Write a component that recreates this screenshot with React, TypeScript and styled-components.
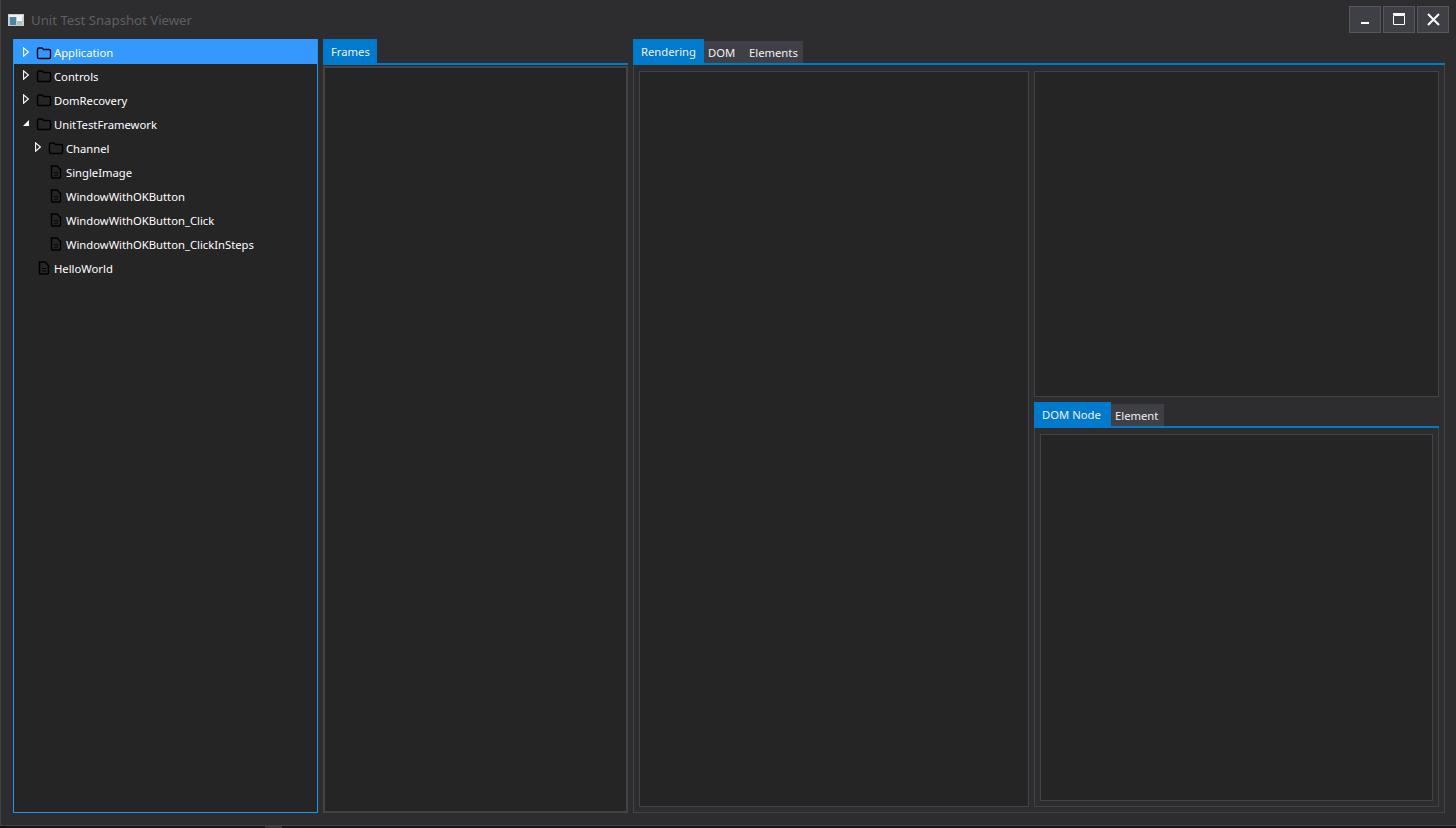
import React from 'react';
import styled, { createGlobalStyle } from 'styled-components';

const GlobalStyle = createGlobalStyle`
  html, body {
    margin: 0;
    height: 100%;
    background: #141414;
    overflow: hidden;
  }
  * {
    box-sizing: border-box;
  }
`;

const Window = styled.div`
  display: flex;
  flex-direction: column;
  width: 1456px;
  height: 826px;
  background-color: #2d2d30;
  border-left: 1px solid #434346;
  border-bottom: 1px solid #434346;
  font-family: 'Noto Sans', 'Open Sans', sans-serif;
  font-size: 11.25px;
  color: #f1f1f1;
`;

const Backdrop = styled.div`
  display: flex;
  height: 2px;
  padding-left: 265px;
`;

const BackdropPiece = styled.div`
  width: 17px;
  background-color: #333337;
`;

const TitleBar = styled.div`
  display: flex;
  align-items: center;
  flex: 0 0 39px;
  padding: 0 7px 0 7px;
`;

const Title = styled.span`
  margin-left: 7px;
  margin-top: 1px;
  font-size: 13.2px;
  color: #5f5f62;
`;

const WindowButtons = styled.div`
  display: flex;
  gap: 2px;
  margin-left: auto;
  margin-top: -1px;
`;

const WindowButton = styled.div`
  display: flex;
  align-items: center;
  justify-content: center;
  width: 32px;
  height: 27px;
  background-color: #3f3f46;
  border: 1px solid #58585c;
`;

const Body = styled.div`
  display: flex;
  flex: 1;
  min-height: 0;
  padding: 0 10px 12px 12px;
`;

const TreePanel = styled.div`
  flex: 0 0 305px;
  background-color: #252526;
  border: 1px solid #1c97ea;
`;

const TreeRow = styled.div<{ $level: number; $selected?: boolean }>`
  display: flex;
  align-items: center;
  padding-left: ${(p) => p.$level * 12 + 5}px;
  padding-top: ${(p) => (p.$selected ? '2px' : '0')};
  background-color: ${(p) => (p.$selected ? '#3399ff' : 'transparent')};
  color: #ffffff;
  margin-top: ${(p) => (p.$selected ? '-1px' : '0')};
  height: ${(p) => (p.$selected ? '25px' : '24px')};
`;

const Expander = styled.span`
  display: flex;
  align-items: center;
  justify-content: center;
  width: 13px;
  height: 24px;
  margin-top: -2px;
`;

const TreeIcon = styled.span`
  display: flex;
  align-items: center;
  justify-content: center;
  width: 16px;
  height: 16px;
  margin: 0 2px 0 4px;
`;

const FramesColumn = styled.div`
  display: flex;
  flex-direction: column;
  flex: 0 0 305px;
  margin-left: 5px;
`;

const MainColumn = styled.div`
  display: flex;
  flex-direction: column;
  flex: 0 0 812px;
  margin-left: 5px;
`;

const TabStrip = styled.div`
  display: flex;
  align-items: flex-end;
  flex: 0 0 26px;
  border-bottom: 2px solid #007acc;
`;

const Tab = styled.div<{ $active?: boolean; $width: number }>`
  display: flex;
  align-items: center;
  width: ${(p) => p.$width}px;
  height: ${(p) => (p.$active ? 24 : 22)}px;
  background-color: ${(p) => (p.$active ? '#007acc' : '#3f3f46')};
  color: #f1f1f1;
  padding-left: ${(p) => (p.$active ? 8 : 4)}px;
`;

const FramesPane = styled.div`
  flex: 1;
  margin-top: 1px;
  background-color: #252526;
  border: 2px solid #434346;
`;

const TabFrame = styled.div`
  display: flex;
  flex: 1;
  min-height: 0;
  gap: 4px;
  padding: 6px 5px 5px;
  border: 1px solid #434346;
  border-top: 0;
`;

const ContentPane = styled.div<{ $fixedHeight?: number }>`
  flex: ${(p) => (p.$fixedHeight ? `0 0 ${p.$fixedHeight}px` : '1')};
  background-color: #252526;
  border: 1px solid #434346;
`;

const SideColumn = styled.div`
  display: flex;
  flex-direction: column;
  flex: 0 0 405px;
`;

const NodeTabs = styled.div`
  display: flex;
  flex-direction: column;
  flex: 1;
  min-height: 0;
  margin-top: 5px;
`;

const LeftPane = styled(ContentPane)`
  flex: 0 0 390px;
  margin-right: 1px;
`;

const FolderIcon = ({ selected }: { selected?: boolean }) => (
  <svg width="16" height="16" viewBox="0 0 16 16">
    <path
      d="M1.5 4.5 C1.5 3.5 2 3 3 3 H6 L7.5 4.5 H13 C14 4.5 14.5 5 14.5 6 V12 C14.5 13 14 13.5 13 13.5 H3 C2 13.5 1.5 13 1.5 12 Z"
      fill={selected ? '#3399ff' : '#252526'}
      stroke="#000000"
      strokeWidth="1.4"
    />
  </svg>
);

const FileIcon = () => (
  <svg width="16" height="16" viewBox="0 0 16 16">
    <path
      d="M3.5 2 H9 L12.5 5.5 V13 C12.5 13.6 12.1 14 11.5 14 H4.5 C3.9 14 3.5 13.6 3.5 13 Z"
      fill="#252526"
      stroke="#000000"
      strokeWidth="1.5"
    />
    <path d="M6 8.5 H10 M6 11 H10" stroke="#000000" strokeWidth="1" />
  </svg>
);

const CollapsedArrow = () => (
  <svg width="6" height="10" viewBox="0 0 6 10">
    <path d="M0.6 0.8 L5.4 5 L0.6 9.2 Z" fill="none" stroke="#ffffff" strokeWidth="1.1" />
  </svg>
);

const ExpandedArrow = () => (
  <svg width="8" height="8" viewBox="0 0 8 8">
    <path d="M7 1 V7 H1 Z" fill="#ffffff" />
  </svg>
);

const AppIcon = () => (
  <svg width="16" height="12" viewBox="0 0 16 12">
    <rect x="0" y="0" width="16" height="12" fill="#c9ccd2" />
    <rect x="1" y="1" width="14" height="2" fill="#eef0f2" />
    <rect x="2" y="3" width="6" height="8" fill="#4a86a8" />
    <rect x="9" y="3" width="5" height="4" fill="#f4f6f8" />
    <rect x="9" y="7" width="5" height="4" fill="#a9c4b8" />
  </svg>
);

type TreeItem = {
  label: string;
  level: number;
  kind: 'folder' | 'file';
  expanded?: boolean;
  selected?: boolean;
};

const treeItems: TreeItem[] = [
  { label: 'Application', level: 0, kind: 'folder', selected: true },
  { label: 'Controls', level: 0, kind: 'folder' },
  { label: 'DomRecovery', level: 0, kind: 'folder' },
  { label: 'UnitTestFramework', level: 0, kind: 'folder', expanded: true },
  { label: 'Channel', level: 1, kind: 'folder' },
  { label: 'SingleImage', level: 1, kind: 'file' },
  { label: 'WindowWithOKButton', level: 1, kind: 'file' },
  { label: 'WindowWithOKButton_Click', level: 1, kind: 'file' },
  { label: 'WindowWithOKButton_ClickInSteps', level: 1, kind: 'file' },
  { label: 'HelloWorld', level: 0, kind: 'file' },
];

const App = () => {
  return (
    <>
      <GlobalStyle />
      <Window>
        <TitleBar>
          <AppIcon />
          <Title>Unit Test Snapshot Viewer</Title>
          <WindowButtons>
            <WindowButton>
              <svg width="12" height="12" viewBox="0 0 12 12">
                <rect x="2" y="9" width="8" height="2" fill="#ffffff" />
              </svg>
            </WindowButton>
            <WindowButton>
              <svg width="12" height="12" viewBox="0 0 12 12">
                <path d="M0.5 2.5 H11.5 V11.5 H0.5 Z" fill="none" stroke="#ffffff" />
                <rect x="0" y="0" width="12" height="2" fill="#ffffff" />
              </svg>
            </WindowButton>
            <WindowButton>
              <svg width="13" height="13" viewBox="0 0 13 13">
                <path d="M1 1 L12 12 M12 1 L1 12" stroke="#ffffff" strokeWidth="2" />
              </svg>
            </WindowButton>
          </WindowButtons>
        </TitleBar>
        <Body>
          <TreePanel>
            {treeItems.map((item) => (
              <TreeRow key={item.label} $level={item.level} $selected={item.selected}>
                <Expander>
                  {item.kind === 'folder' && (item.expanded ? <ExpandedArrow /> : <CollapsedArrow />)}
                </Expander>
                <TreeIcon>{item.kind === 'folder' ? <FolderIcon selected={item.selected} /> : <FileIcon />}</TreeIcon>
                {item.label}
              </TreeRow>
            ))}
          </TreePanel>
          <FramesColumn>
            <TabStrip>
              <Tab $active $width={54}>
                Frames
              </Tab>
            </TabStrip>
            <FramesPane />
          </FramesColumn>
          <MainColumn>
            <TabStrip>
              <Tab $active $width={71}>
                Rendering
              </Tab>
              <Tab $width={41}>DOM</Tab>
              <Tab $width={58}>Elements</Tab>
            </TabStrip>
            <TabFrame>
              <LeftPane />
              <SideColumn>
                <ContentPane $fixedHeight={326} />
                <NodeTabs>
                  <TabStrip>
                    <Tab $active $width={77}>
                      DOM Node
                    </Tab>
                    <Tab $width={53}>Element</Tab>
                  </TabStrip>
                  <TabFrame>
                    <ContentPane />
                  </TabFrame>
                </NodeTabs>
              </SideColumn>
            </TabFrame>
          </MainColumn>
        </Body>
      </Window>
      <Backdrop>
        <BackdropPiece />
      </Backdrop>
    </>
  );
};

export default App;
